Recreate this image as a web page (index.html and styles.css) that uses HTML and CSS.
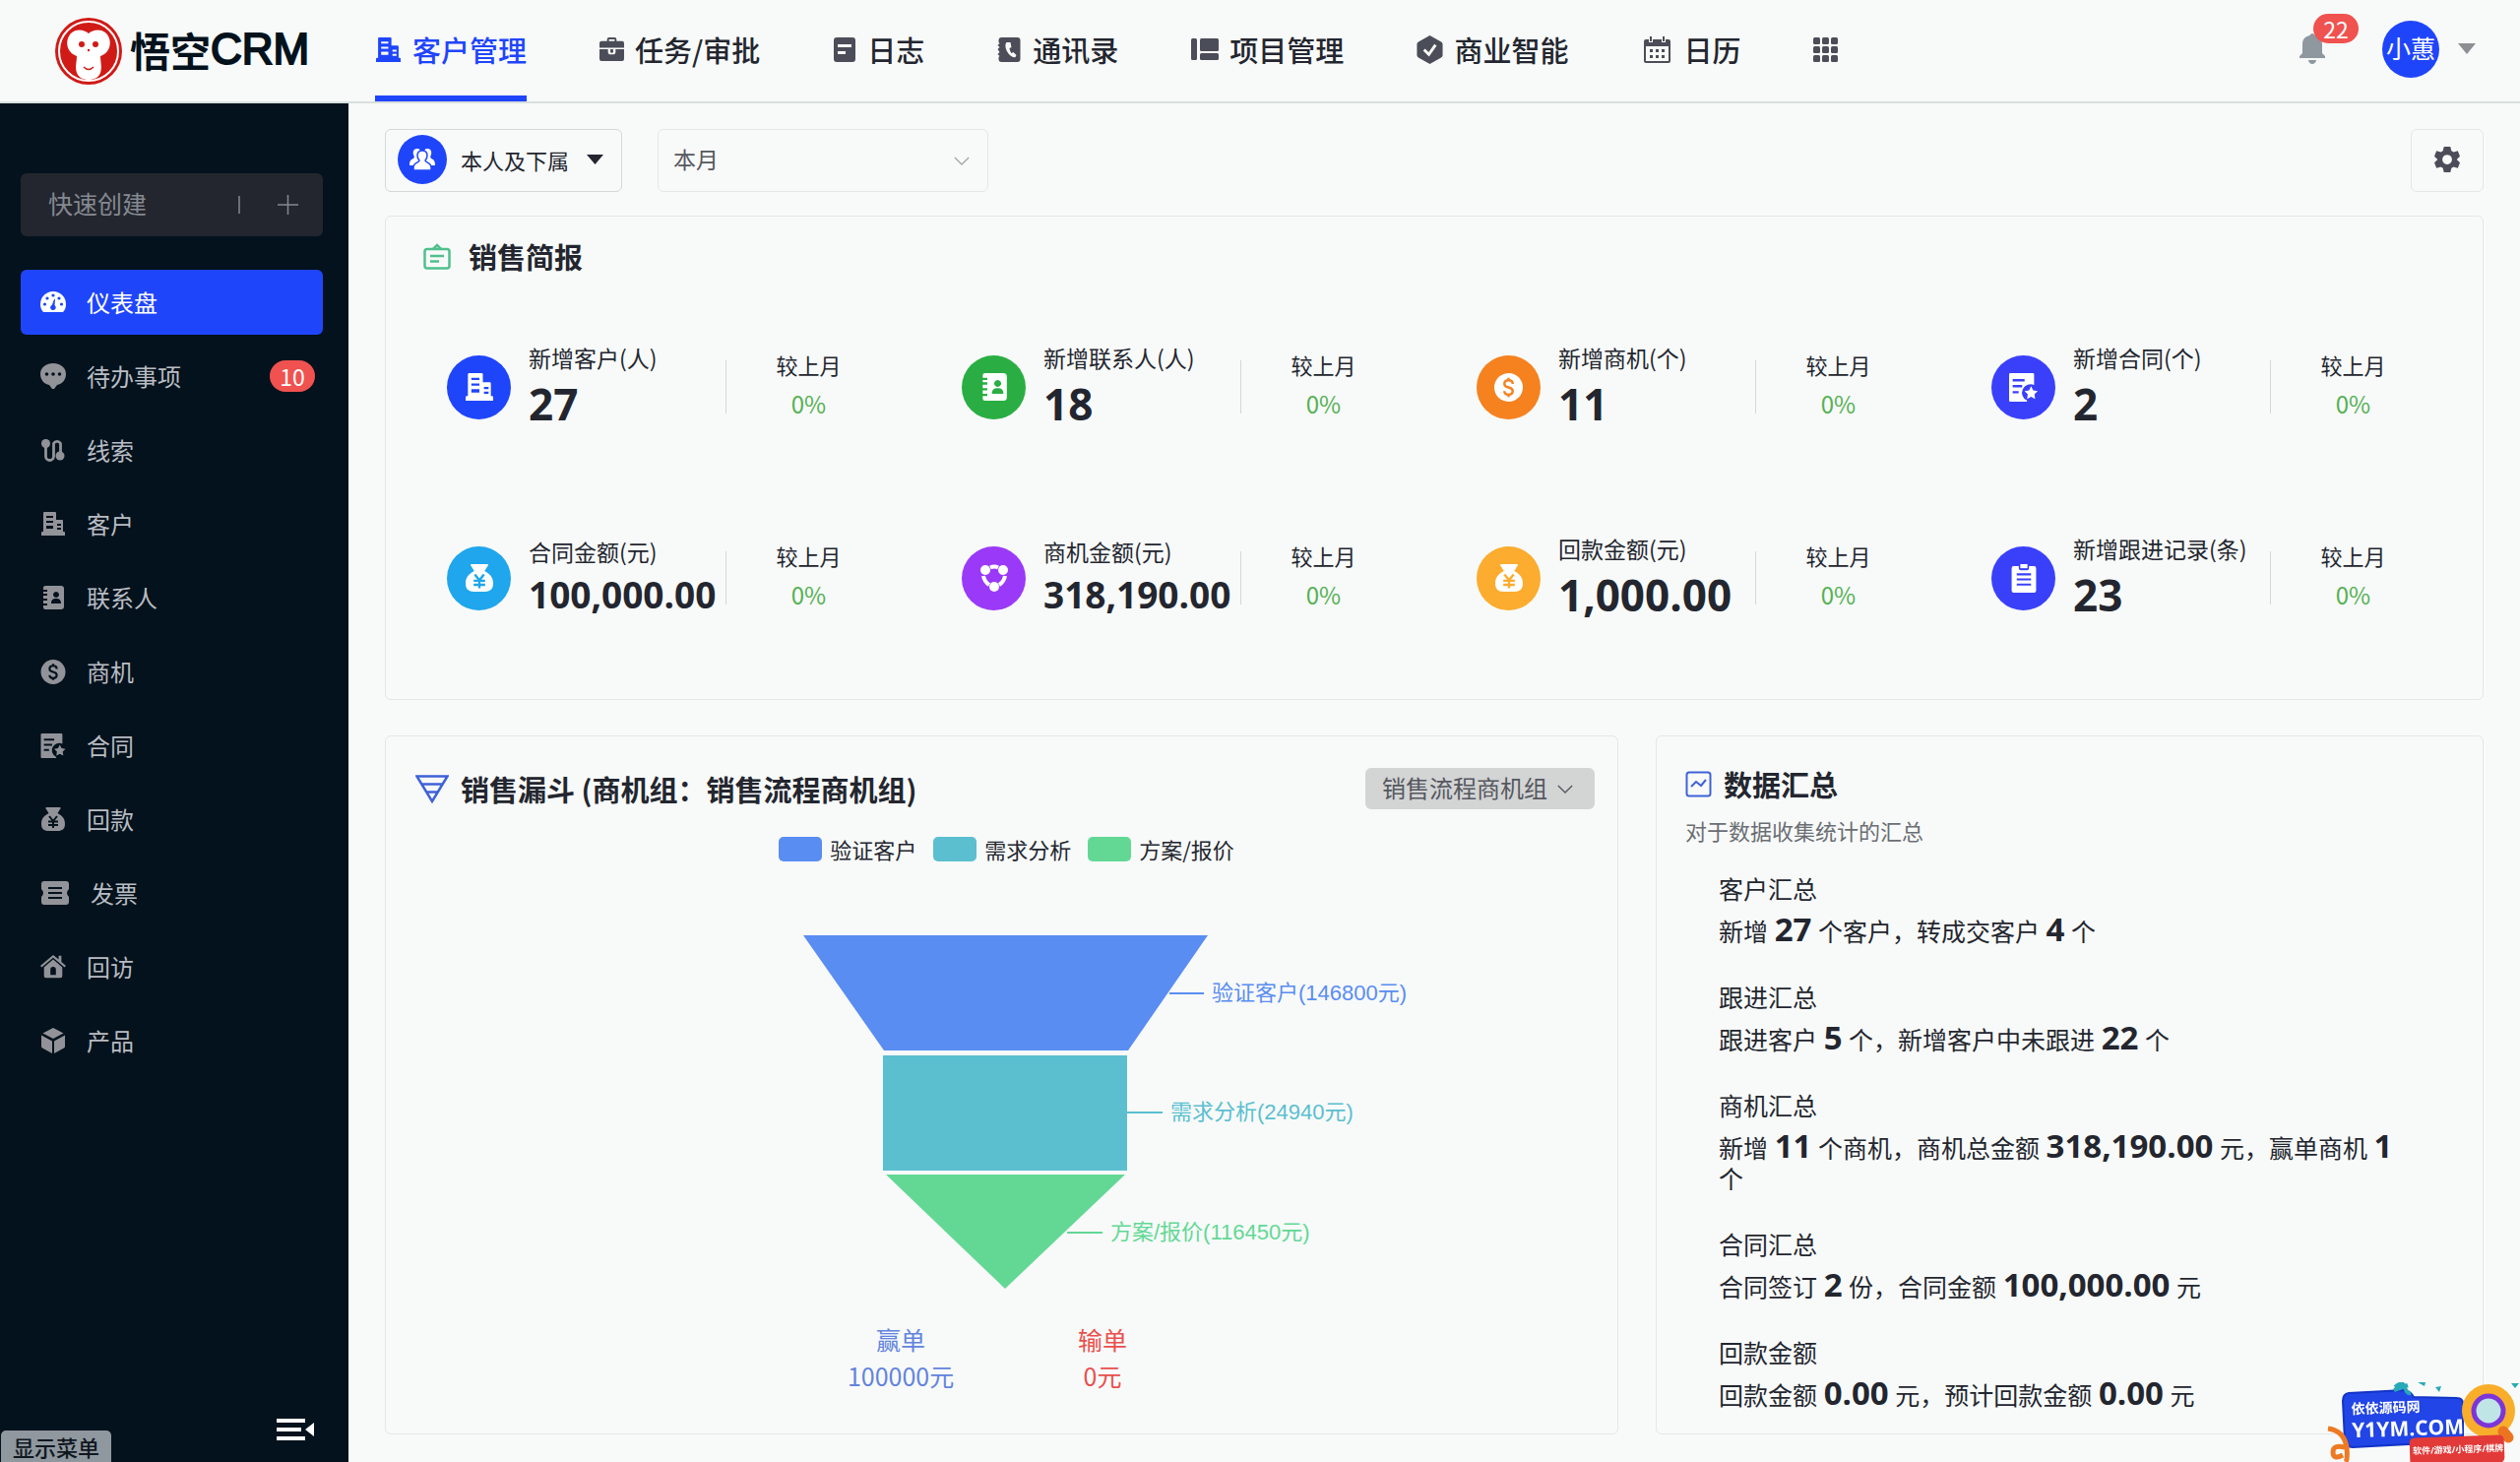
FILE: index.html
```html
<!DOCTYPE html>
<html lang="zh-CN">
<head>
<meta charset="utf-8">
<title>悟空CRM</title>
<meta name="viewport" content="width=device-width, initial-scale=1">
<link rel="stylesheet" href="styles.css">
</head>
<body>
<svg class="sprite" aria-hidden="true">
  <symbol id="i-building" viewBox="0 0 24 24"><path fill-rule="evenodd" d="M3 0h11a1 1 0 0 1 1 1v7h6a1 1 0 0 1 1 1v11h1a1 1 0 0 1 1 1v3H0v-3a1 1 0 0 1 1-1h1V1a1 1 0 0 1 1-1zM5 4v2h7V4zM5 9v2h7V9zM5 14v3h7v-3zM16 12v2h4v-2zM16 16v2h4v-2z"/></symbol>
  <symbol id="i-contact" viewBox="0 0 24 24"><path fill-rule="evenodd" d="M4 0h16a3 3 0 0 1 3 3v18a3 3 0 0 1-3 3H4a2 2 0 0 1-2-2v-2h4v-2H2v-3h4v-2H2v-3h4V8H2V6h4V4H2V2a2 2 0 0 1 2-2zM15 6a3 3 0 1 0 .01 0zM10 18h10c0-4-2-5-5-5s-5 1-5 5z"/></symbol>
  <symbol id="i-dollar" viewBox="0 0 24 24"><circle cx="12" cy="12" r="12"/><path class="cut" stroke-width="2" d="M15.500 9c0-2-1.500-3-3.500-3S8.500 7 8.500 9s1.500 2.500 3.500 3 3.500 1 3.500 3-1.500 3-3.500 3-3.500-1-3.500-3M12 4v2.500M12 17.500V20"/></symbol>
  <symbol id="i-contract" viewBox="0 0 24 24"><path fill-rule="evenodd" d="M1 0h19a1 1 0 0 1 1 1v9a7 7 0 0 0-6 13v1H1a1 1 0 0 1-1-1V1a1 1 0 0 1 1-1zM3 5v2h10V5zM3 10v2h8v-2zM3 15v2h5v-2z"/><path d="M18.500 11l1.700 3.500 3.800.600-2.700 2.700.600 3.900-3.400-1.900-3.400 1.900.600-3.900-2.700-2.700 3.800-.600z"/></symbol>
  <symbol id="i-bag" viewBox="0 0 24 24"><path d="M6 0h12a1 1 0 0 1 1 2l-2.500 4C22 9 24 12 24 17c0 5-3 7-7 7H7c-4 0-7-2-7-7 0-5 2-8 7.500-11L5 2a1 1 0 0 1 1-2z"/><path class="cut" stroke-width="2" d="M8 9l4 5 4-5M7 14.500h10M7 18h10M12 14v7"/></symbol>
  <symbol id="i-gauge" viewBox="0 0 26 22"><path d="M3 21C1 19 0 16 0 13a13 13 0 0 1 26 0c0 3-1 6-3 8z"/><g class="cutfill"><circle cx="4.500" cy="13" r="1.600"/><circle cx="7" cy="7" r="1.600"/><circle cx="13" cy="4" r="1.600"/><circle cx="19" cy="7" r="1.600"/><circle cx="21.500" cy="13" r="1.600"/><path d="M14 8l1 0-.500 6a2.800 2.800 0 1 1-2.600-.300z"/></g></symbol>
  <symbol id="i-chat" viewBox="0 0 26 26"><path d="M13 0c7 0 13 4 13 11 0 6-4 10-9 11l-3 4h-2l-3-4C4 21 0 17 0 11 0 4 6 0 13 0z"/><g class="cutfill"><circle cx="6.500" cy="11" r="1.800"/><circle cx="13" cy="11" r="1.800"/><circle cx="19.500" cy="11" r="1.800"/></g></symbol>
  <symbol id="i-route" viewBox="0 0 24 24"><circle cx="4.500" cy="5.500" r="4.500"/><circle cx="19" cy="18" r="4.500"/><path fill="none" stroke="currentColor" stroke-width="2.800" d="M4.500 6v12.500a4 4 0 0 0 8 0V5.500a4 4 0 0 1 7 0V16"/></symbol>
  <symbol id="i-ticket" viewBox="0 0 28 24"><path fill-rule="evenodd" d="M3 0h22a3 3 0 0 1 3 3v5q-4 4 0 8v5a3 3 0 0 1-3 3H3a3 3 0 0 1-3-3v-5q4-4 0-8V3a3 3 0 0 1 3-3zM7 6v2h14V6zM7 11v2h14v-2zM7 16v2h14v-2z"/></symbol>
  <symbol id="i-home" viewBox="0 0 28 26"><path d="M14 0l6 5V1h3v6.500l5 4.500-1.500 1.500L14 3 1.500 13.500 0 12z"/><path fill-rule="evenodd" d="M14 5l10 8.500V23a2 2 0 0 1-2 2H6a2 2 0 0 1-2-2v-9.500zM11 22h6v-6a3 3 0 0 0-6 0z"/></symbol>
  <symbol id="i-cube" viewBox="0 0 24 26"><path d="M12 0l10.500 5.500L12 11 1.500 5.500zM0 7.500l11 6V26L1 20.500a2 2 0 0 1-1-1.500zM24 7.500l-11 6V26l10-5.500a2 2 0 0 0 1-1.500z"/></symbol>
  <symbol id="i-clip" viewBox="0 0 24 28"><path fill-rule="evenodd" d="M2 2h5v2a2 2 0 0 0 2 2h6a2 2 0 0 0 2-2V2h5a2 2 0 0 1 2 2v22a2 2 0 0 1-2 2H2a2 2 0 0 1-2-2V4a2 2 0 0 1 2-2zM5 9v2h14V9zM5 14v2h14v-2zM5 19v2h14v-2z"/><path d="M8.500 0h7v4h-7z"/></symbol>
  <symbol id="i-chevron" viewBox="0 0 18 10"><path fill="none" stroke="currentColor" stroke-width="1.500" d="M1 1l8 8 8-8"/></symbol>
</svg>

<header class="topbar">
  <a class="brand" href="#" aria-label="悟空CRM">
    <svg class="brand-mark" viewBox="0 0 68 68" aria-hidden="true">
      <circle cx="34" cy="34" r="34" fill="#d01a16"/><circle cx="34" cy="34" r="30" fill="none" stroke="#fff" stroke-width="2"/>
      <path fill="#fff" d="M34 16c4-4 12-5 17-1 6 5 6 14 2 19-2 3-5 4-7 5 0 6 2 11 0 17-2 5-7 7-12 7s-10-2-12-7c-2-6 0-11 0-17-2-1-5-2-7-5-4-5-4-14 2-19 5-4 13-3 17 1z"/>
      <circle cx="27" cy="27" r="3" fill="#d01a16"/><circle cx="41" cy="27" r="3" fill="#d01a16"/><circle cx="34" cy="33" r="1.200" fill="#d01a16"/>
      <path fill="none" stroke="#d01a16" stroke-width="1.500" d="M29 50q5 5 10 0"/>
    </svg>
    <span class="brand-name">悟空<span class="brand-latin">CRM</span></span>
  </a>
  <nav class="modules" aria-label="模块">
    <a class="module is-active" href="#"><svg width="27" height="25"><use href="#i-building"/></svg>客户管理</a>
    <a class="module" href="#"><svg width="25" height="24" viewBox="0 0 26 25"><path fill-rule="evenodd" d="M8 4V2a2 2 0 0 1 2-2h6a2 2 0 0 1 2 2v2h6a2 2 0 0 1 2 2v5H0V6a2 2 0 0 1 2-2zM10 4h6V2h-6z"/><path d="M0 12.500h9V15a3 3 0 0 0 3 3h2a3 3 0 0 0 3-3v-2.500h9V23a2 2 0 0 1-2 2H2a2 2 0 0 1-2-2z"/><path d="M11.500 12.500h3V15a1.500 1.500 0 0 1-3 0z"/></svg>任务/审批</a>
    <a class="module" href="#"><svg width="24" height="25" viewBox="0 0 24 25"><path fill-rule="evenodd" d="M4 0h16a3 3 0 0 1 3 3v19a3 3 0 0 1-3 3H4a3 3 0 0 1-3-3V3a3 3 0 0 1 3-3zM5 7v3h14V7zM5 14v3h8v-3z"/></svg>日志</a>
    <a class="module" href="#"><svg width="25" height="25" viewBox="0 0 24 25"><path fill-rule="evenodd" d="M4 0h16a3 3 0 0 1 3 3v19a3 3 0 0 1-3 3H4a3 3 0 0 1-3-3v-2l1-1-2-2 2-2-2-3 2-2-2-2 2-2-1-1V3a3 3 0 0 1 3-3zM9 5c-2 2-1 7 1 10s5 6 8 5l1-2-3-3-2 1c-1-1-2-4-2-5l2-1-1-5z"/></svg>通讯录</a>
    <a class="module" href="#"><svg width="28" height="22" viewBox="0 0 28 22"><rect width="6" height="22" rx="1.500"/><rect x="9" width="19" height="13" rx="1.500"/><rect x="9" y="15" width="19" height="7" rx="1.500"/></svg>项目管理</a>
    <a class="module" href="#"><svg width="27" height="29" viewBox="0 0 27 30"><path d="M13.500 0l11.500 6.500a3 3 0 0 1 2 2.500v12a3 3 0 0 1-2 2.500L13.500 30 2 23.500A3 3 0 0 1 0 21V9a3 3 0 0 1 2-2.500z"/><path class="cut" stroke-width="3" d="M7.500 15l5 5 7-10"/></svg>商业智能</a>
    <a class="module" href="#"><svg width="32" height="27" viewBox="0 0 30 27"><path fill-rule="evenodd" d="M4 3h3v3h4V3h9v3h4V3h3a2 2 0 0 1 2 2v20a2 2 0 0 1-2 2H4a2 2 0 0 1-2-2V5a2 2 0 0 1 2-2zM4 10v15h23V10z"/><path d="M8 0h2v5H8zM21 0h2v5h-2zM8 13h3v3H8zM14 13h3v3h-3zM20 13h3v3h-3zM8 19h3v3H8zM14 19h3v3h-3zM20 19h3v3h-3z"/></svg>日历</a>
    <button class="module module-more" type="button" aria-label="更多"><svg width="25" height="25" viewBox="0 0 25 25"><g><rect width="7" height="7" rx="1.500"/><rect x="9" width="7" height="7" rx="1.500"/><rect x="18" width="7" height="7" rx="1.500"/><rect y="9" width="7" height="7" rx="1.500"/><rect x="9" y="9" width="7" height="7" rx="1.500"/><rect x="18" y="9" width="7" height="7" rx="1.500"/><rect y="18" width="7" height="7" rx="1.500"/><rect x="9" y="18" width="7" height="7" rx="1.500"/><rect x="18" y="18" width="7" height="7" rx="1.500"/></g></svg></button>
  </nav>
  <div class="account">
    <button class="bell" type="button" aria-label="通知"><svg width="26" height="31" viewBox="0 0 26 31"><path d="M13 0c1.500 0 2 1 2.500 2 5 1 7.500 4 7.500 9v9l3 3v2H0v-2l3-3v-9c0-5 2.500-8 7.500-9C11 1 11.500 0 13 0zM9 27h8c0 2-2 4-4 4s-4-2-4-4z"/></svg><span class="badge bell-badge">22</span></button>
    <button class="user" type="button"><span class="avatar">小蕙</span><svg width="18" height="11" viewBox="0 0 18 11"><path d="M0 0h18L9 11z"/></svg></button>
  </div>
</header>

<div class="shell">
  <aside class="sidebar">
    <button class="quick" type="button"><span>快速创建</span><svg width="61" height="22" viewBox="0 0 61 22" aria-hidden="true"><path fill="none" stroke="currentColor" stroke-width="1.500" d="M1 2v18M40 11h21M50.500 1v20"/></svg></button>
    <nav class="menu" aria-label="客户管理">
      <a class="menu-item is-active" href="#"><svg width="26" height="22"><use href="#i-gauge"/></svg>仪表盘</a>
      <a class="menu-item" href="#"><svg width="26" height="26"><use href="#i-chat"/></svg>待办事项<span class="badge">10</span></a>
      <a class="menu-item" href="#"><svg width="26" height="24"><use href="#i-route"/></svg>线索</a>
      <a class="menu-item" href="#"><svg width="26" height="24"><use href="#i-building"/></svg>客户</a>
      <a class="menu-item" href="#"><svg width="26" height="24"><use href="#i-contact"/></svg>联系人</a>
      <a class="menu-item" href="#"><svg width="26" height="25"><use href="#i-dollar"/></svg>商机</a>
      <a class="menu-item" href="#"><svg width="26" height="25"><use href="#i-contract"/></svg>合同</a>
      <a class="menu-item" href="#"><svg width="26" height="24"><use href="#i-bag"/></svg>回款</a>
      <a class="menu-item" href="#"><svg width="30" height="24"><use href="#i-ticket"/></svg>发票</a>
      <a class="menu-item" href="#"><svg width="26" height="26"><use href="#i-home"/></svg>回访</a>
      <a class="menu-item" href="#"><svg width="26" height="26"><use href="#i-cube"/></svg>产品</a>
    </nav>
    <button class="collapse" type="button" aria-label="收起菜单"><svg width="38" height="22" viewBox="0 0 38 22"><path d="M0 0h29v4H0zM0 9h25v4H0zM0 18h29v4H0zM29 11l9-7v14z"/></svg></button>
    <span class="menu-tip">显示菜单</span>
  </aside>

  <main class="content">
    <div class="toolbar">
      <button class="scope" type="button"><span class="scope-icon"><svg width="26" height="24" viewBox="0 0 26 24"><g fill="currentColor"><path d="M8 1c2 0 3 1 3 3-2 2-2 5 0 8-3 2-4 4-4 6H0c0-4 1-6 4-7 1-1 1-2 0-4-1-4 1-6 4-6zM18 1c-2 0-3 1-3 3 2 2 2 5 0 8 3 2 4 4 4 6h7c0-4-1-6-4-7-1-1-1-2 0-4 1-4-1-6-4-6z"/><path stroke="#1f45fb" stroke-width="1.500" d="M13 3c3 0 5 2 5 5 0 2-1 4-2 5 0 2 6 2 6 7v3H4v-3c0-5 6-5 6-7-1-1-2-3-2-5 0-3 2-5 5-5z"/></g></svg></span>本人及下属<svg class="caret" width="17" height="10" viewBox="0 0 17 10"><path d="M0 0h17L8.500 10z"/></svg></button>
      <label class="picker period"><select aria-label="时间"><option>本月</option></select><svg width="16" height="9"><use href="#i-chevron"/></svg></label>
      <button class="settings" type="button" aria-label="设置"><svg width="26" height="26" viewBox="0 0 24 24"><path fill-rule="evenodd" d="M9 0h6l1 4 2 1 4-1 2 5-3 3 3 3-2 5-4-1-2 1-1 4H9l-1-4-2-1-4 1-2-5 3-3-3-3 2-5 4 1 2-1zM12 7.500a4.500 4.500 0 1 0 .01 0z"/></svg></button>
    </div>

    <section class="card brief">
      <h2 class="card-title brief-title"><svg width="28" height="27" viewBox="0 0 28 27"><g fill="none" stroke="#4fc08d" stroke-width="2.500"><rect x="1.500" y="6" width="25" height="19.500" rx="2.500"/><path d="M10 6l4-4 4 4M7 13h14M7 18.500h9"/></g></svg>销售简报</h2>
      <div class="metrics">
        <article class="metric"><span class="disc disc-blue"><svg width="28" height="28"><use href="#i-building"/></svg></span><div class="figure"><h3>新增客户(人)</h3><strong>27</strong></div><div class="trend"><span>较上月</span><em>0%</em></div></article>
        <article class="metric"><span class="disc disc-green"><svg width="28" height="28"><use href="#i-contact"/></svg></span><div class="figure"><h3>新增联系人(人)</h3><strong>18</strong></div><div class="trend"><span>较上月</span><em>0%</em></div></article>
        <article class="metric"><span class="disc disc-orange"><svg width="29" height="29"><use href="#i-dollar"/></svg></span><div class="figure"><h3>新增商机(个)</h3><strong>11</strong></div><div class="trend"><span>较上月</span><em>0%</em></div></article>
        <article class="metric"><span class="disc disc-indigo"><svg width="29" height="29"><use href="#i-contract"/></svg></span><div class="figure"><h3>新增合同(个)</h3><strong>2</strong></div><div class="trend"><span>较上月</span><em>0%</em></div></article>
        <article class="metric"><span class="disc disc-sky"><svg width="28" height="28"><use href="#i-bag"/></svg></span><div class="figure"><h3>合同金额(元)</h3><strong class="long">100,000.00</strong></div><div class="trend"><span>较上月</span><em>0%</em></div></article>
        <article class="metric"><span class="disc disc-purple"><svg width="30" height="28" viewBox="0 0 30 28"><circle cx="6" cy="6" r="5"/><circle cx="24" cy="6" r="5"/><circle cx="15" cy="23" r="5"/><path fill="none" stroke="currentColor" stroke-width="4" d="M11 3.500q4-2 8 0M4 12q1 6 6 9M26 12q-1 6-6 9"/></svg></span><div class="figure"><h3>商机金额(元)</h3><strong class="long">318,190.00</strong></div><div class="trend"><span>较上月</span><em>0%</em></div></article>
        <article class="metric"><span class="disc disc-amber"><svg width="28" height="28"><use href="#i-bag"/></svg></span><div class="figure"><h3>回款金额(元)</h3><strong>1,000.00</strong></div><div class="trend"><span>较上月</span><em>0%</em></div></article>
        <article class="metric"><span class="disc disc-indigo"><svg width="28" height="29"><use href="#i-clip"/></svg></span><div class="figure"><h3>新增跟进记录(条)</h3><strong>23</strong></div><div class="trend"><span>较上月</span><em>0%</em></div></article>
      </div>
    </section>

    <div class="lower">
      <section class="card funnel">
        <header class="funnel-head">
          <h2 class="card-title"><svg width="34" height="29" viewBox="0 0 34 29"><path fill="none" stroke="#3f62d8" stroke-width="2.500" d="M1.500 1.500h31L17 27zM6 9.500h22M11 17.500h12"/></svg>销售漏斗 (商机组：销售流程商机组)</h2>
          <label class="picker group"><select aria-label="商机组"><option>销售流程商机组</option></select><svg width="16" height="9"><use href="#i-chevron"/></svg></label>
        </header>
        <ul class="legend"><li><i class="swatch swatch-blue"></i>验证客户</li><li><i class="swatch swatch-teal"></i>需求分析</li><li><i class="swatch swatch-green"></i>方案/报价</li></ul>
        <svg class="funnel-chart" width="1000" height="360" viewBox="0 0 1000 360" role="img" aria-label="销售漏斗">
          <g class="stage-blue"><path d="M298 0h411l-81 117H380z"/><path class="lead" d="M670 59h35"/><text x="713" y="66">验证客户(146800元)</text></g>
          <g class="stage-teal"><path d="M379 122h248v117H379z"/><path class="lead" d="M627 180h36"/><text x="671" y="187">需求分析(24940元)</text></g>
          <g class="stage-green"><path d="M382 243h243L503 359z"/><path class="lead" d="M566 302h36"/><text x="610" y="309">方案/报价(116450元)</text></g>
        </svg>
        <dl class="outcome"><div class="won"><dt>赢单</dt><dd>100000元</dd></div><div class="lost"><dt>输单</dt><dd>0元</dd></div></dl>
      </section>

      <section class="card summary">
        <h2 class="card-title"><svg width="27" height="27" viewBox="0 0 27 27"><g fill="none" stroke="#3f62d8" stroke-width="2"><rect x="1.500" y="1.500" width="24" height="24" rx="2.500"/><path d="M6 16l5-5 5 4 5-6"/></g></svg>数据汇总</h2>
        <p class="summary-note">对于数据收集统计的汇总</p>
        <div class="summary-list">
          <div class="entry"><h3>客户汇总</h3><p>新增 <b>27</b> 个客户，转成交客户 <b>4</b> 个</p></div>
          <div class="entry"><h3>跟进汇总</h3><p>跟进客户 <b>5</b> 个，新增客户中未跟进 <b>22</b> 个</p></div>
          <div class="entry"><h3>商机汇总</h3><p>新增 <b>11</b> 个商机，商机总金额 <b>318,190.00</b> 元，赢单商机 <b>1</b> 个</p></div>
          <div class="entry"><h3>合同汇总</h3><p>合同签订 <b>2</b> 份，合同金额 <b>100,000.00</b> 元</p></div>
          <div class="entry"><h3>回款金额</h3><p>回款金额 <b>0.00</b> 元，预计回款金额 <b>0.00</b> 元</p></div>
        </div>
      </section>
    </div>
  </main>
</div>

<a class="promo" href="#" aria-label="依依源码网"><svg width="196" height="81" viewBox="0 0 196 81">
  <path fill="#2145e6" stroke="#1234c8" stroke-width="2" d="M22 11l56-3q6 0 10 7l44 1q6 0 6 6v38l-112 6q-7 0-8-7l-2-40q0-7 6-8z"/>
  <path fill="none" stroke="#27a9b8" stroke-width="4" d="M69 5q8-7 10 0t6 6M68 8l14-5"/><path fill="#27a9b8" d="M92 0h8l-1 4zM110 5l6-1-2 6zM187 1l8 0-4 5z"/>
  <path fill="none" stroke="#ee7a24" stroke-width="5" d="M1 47q16 2 19 19 1 12-1 15M18 66q-12-3-12 5t10 3"/>
  <circle cx="164" cy="29" r="22" fill="#d4eef0" stroke="#f9ae2b" stroke-width="10"/><circle cx="164" cy="29" r="15" fill="#bfe5e6" stroke="#7d35d8" stroke-width="5"/>
  <path stroke="#ec7421" stroke-width="11" stroke-linecap="round" d="M179 50l5 6"/>
  <rect x="84" y="55" width="96" height="28" rx="5" fill="#e23a38" transform="rotate(-2 132 68)"/>
  <g fill="#fff" transform="rotate(-2 90 40)"><text class="promo-cn" x="25" y="30">依依源码网</text><text class="promo-en" x="25" y="54">Y1YM.COM</text><text class="promo-tag" x="86" y="73">软件/游戏/小程序/棋牌</text></g>
</svg></a>
</body>
</html>
```
FILE: styles.css
```css
:root {
  --page: #f8faf9;
  --line: #e2e7e8;
  --ink: #23262f;
  --blue: #1f45fb;
  --red: #f0524f;
  --night: #03121c;
}

* { box-sizing: border-box; }

body {
  margin: 0;
  min-height: 100vh;
  display: flex;
  flex-direction: column;
  background: var(--page);
  color: var(--ink);
  font: 24px/36px "Noto Sans CJK SC", "Noto Sans", sans-serif;
}

h2, h3, p, ul, dl, dd { margin: 0; padding: 0; font-weight: 400; }
a { color: inherit; text-decoration: none; }
button, select { font: inherit; color: inherit; border: 0; margin: 0; padding: 0; background: none; }
svg { display: block; flex: none; fill: currentColor; }
.sprite { position: absolute; width: 0; height: 0; }
.cut { fill: none; stroke: var(--hole, var(--page)); }
.cutfill { fill: var(--hole, var(--page)); }

.badge {
  min-width: 46px;
  height: 32px;
  padding: 0 10px;
  border-radius: 16px;
  background: var(--red);
  color: #fff;
  font-size: 23px;
  line-height: 32px;
  text-align: center;
}

/* Top bar */
.topbar {
  display: flex;
  align-items: stretch;
  height: 105px;
  padding: 0 45px 0 56px;
  border-bottom: 2px solid #d8dfdd;
}
.brand { display: flex; align-items: center; gap: 8px; width: 325px; }
.brand-mark { width: 68px; height: 68px; }
.brand-name { display: flex; align-items: center; padding-bottom: 3px; font-size: 41px; font-weight: 700; line-height: 64px; color: var(--night); }
.brand-latin { font: 44px/64px "Liberation Sans", Arial, sans-serif; -webkit-text-stroke: 2px currentColor; }
.modules { display: flex; gap: 74px; }
.module {
  display: flex;
  align-items: center;
  gap: 11px;
  padding-top: 3px;
  border-bottom: 6px solid transparent;
  font-size: 29px;
  font-weight: 500;
  white-space: nowrap;
}
.module svg { color: #4b4d58; }
.module.is-active { color: var(--blue); border-color: var(--blue); }
.module.is-active svg { color: inherit; }
.account { display: flex; align-items: center; gap: 58px; margin-left: auto; padding-bottom: 4px; }
.bell { position: relative; color: #8f979f; }
.bell-badge { position: absolute; left: 14px; top: -20px; height: 30px; line-height: 30px; }
.user { display: flex; align-items: center; gap: 19px; color: #8d8f92; }
.avatar { width: 58px; height: 58px; border-radius: 50%; background: var(--blue); color: #fff; font-size: 25px; line-height: 54px; text-align: center; }

.shell { flex: 1; display: flex; }

/* Sidebar */
.sidebar {
  position: relative;
  flex: none;
  display: flex;
  flex-direction: column;
  width: 354px;
  padding: 71px 26px 22px 21px;
  background: var(--night);
  color: #b9bcc3;
}
.quick {
  display: flex;
  align-items: center;
  justify-content: space-between;
  height: 64px;
  padding: 0 25px 0 28px;
  border-radius: 6px;
  background: #23262f;
  color: #85898f;
  font-size: 25px;
}
.quick span { padding-bottom: 4px; }
.menu { display: flex; flex-direction: column; gap: 9px; margin-top: 34px; }
.menu-item {
  --hole: var(--night);
  display: flex;
  align-items: center;
  gap: 21px;
  height: 66px;
  padding: 0 8px 0 20px;
  border-radius: 6px;
}
.menu-item svg { color: #929399; }
.menu-item .badge { margin-left: auto; }
.menu-item.is-active { --hole: var(--blue); background: var(--blue); color: #fff; }
.menu-item.is-active svg { color: #fff; }
.collapse { align-self: flex-end; margin: auto 9px 0 0; color: #fff; }
.menu-tip {
  position: absolute;
  left: 1px;
  bottom: 0;
  padding: 0 12px;
  border-radius: 5px 5px 0 0;
  background: #8f979f;
  color: #101820;
  font-size: 22px;
  font-weight: 500;
  line-height: 32px;
}

/* Content */
.content { flex: 1; min-width: 0; display: flex; flex-direction: column; padding: 26px 37px 28px; }
.toolbar { display: flex; gap: 36px; margin-bottom: 24px; }
.scope {
  display: flex;
  align-items: center;
  height: 64px;
  padding: 0 18px 2px 12px;
  border: 1px solid #d4d8d9;
  border-radius: 6px;
  font-size: 22px;
}
.scope-icon { display: grid; place-items: center; width: 50px; height: 50px; margin-right: 14px; border-radius: 50%; background: var(--blue); color: #fff; }
.caret { margin-left: 18px; }
.picker { position: relative; display: flex; align-items: center; color: #55585f; }
.picker select { width: 100%; height: 100%; appearance: none; }
.picker svg { position: absolute; pointer-events: none; }
.period { width: 336px; border: 1px solid var(--line); border-radius: 6px; font-size: 23px; }
.period select { padding: 0 0 4px 15px; }
.period svg { right: 18px; color: #a3a7aa; }
.settings { display: grid; place-items: center; width: 74px; height: 64px; margin-left: auto; padding-bottom: 2px; border: 1px solid var(--line); border-radius: 6px; color: #4b4d58; }

.card { border: 1px solid var(--line); border-radius: 6px; }
.card-title { display: flex; align-items: center; gap: 12px; font-size: 29px; font-weight: 700; line-height: 40px; }

.brief { padding: 20px 0 26px 38px; }
.brief-title { gap: 18px; }
.metrics { display: grid; grid-template-columns: repeat(4, 1fr); grid-auto-rows: 194px; margin-top: 16px; }
.metric { display: flex; align-items: center; padding: 0 48px 0 24px; }
.disc { display: grid; place-items: center; width: 65px; height: 65px; margin-right: 18px; border-radius: 50%; background: var(--hole); color: #fff; }
.disc-blue { --hole: #1f45fb; }
.disc-green { --hole: #2aae43; }
.disc-orange { --hole: #f5821f; }
.disc-indigo { --hole: #3a40fa; }
.disc-sky { --hole: #1fa6ec; }
.disc-purple { --hole: #9a3af8; }
.disc-amber { --hole: #fcac2f; }
.figure { flex: 1; min-width: 0; white-space: nowrap; }
.figure h3 { margin-bottom: 4px; font-size: 23px; line-height: 30px; }
.figure strong { display: block; font: 700 44px/56px "Open Sans", "Noto Sans", sans-serif; }
.figure .long { font-size: 37px; line-height: 50px; }
.trend { display: flex; flex-direction: column; justify-content: center; width: 168px; height: 54px; padding-bottom: 6px; border-left: 1px solid #d3d7d8; text-align: center; font-size: 22px; line-height: 40px; }
.trend em { font-size: 24px; font-style: normal; color: #55b154; }

.lower { flex: 1; display: grid; grid-template-columns: 149fr 100fr; gap: 38px; margin-top: 36px; }

/* Funnel */
.funnel { padding: 32px 0 38px; }
.funnel-head { display: flex; align-items: center; justify-content: space-between; padding: 0 23px 0 30px; }
.group { height: 42px; border-radius: 6px; background: #d3d4d4; }
.group select { padding: 0 48px 2px 17px; }
.group svg { right: 22px; }
.legend { display: flex; justify-content: center; gap: 17px; margin-top: 27px; padding-left: 10px; list-style: none; font-size: 22px; line-height: 26px; }
.legend li { display: flex; align-items: center; gap: 8px; }
.swatch { width: 44px; height: 25px; border-radius: 5px; }
.swatch-blue { background: #5a8df2; }
.swatch-teal { background: #5bbfd0; }
.swatch-green { background: #63d895; }
.funnel-chart { max-width: 100%; margin: 75px auto 0; font: 22px "Liberation Sans", "Noto Sans CJK SC", sans-serif; }
.lead { stroke: currentColor; stroke-width: 2; }
.stage-blue { color: #5a8df2; fill: #5a8df2; }
.stage-teal { color: #5bbfd0; fill: #5bbfd0; }
.stage-green { color: #63d895; fill: #63d895; }
.outcome { display: flex; justify-content: center; margin-top: 32px; font-size: 25px; line-height: 37px; text-align: center; }
.outcome div { width: 205px; }
.won { color: #6384dd; }
.lost { color: #e9504d; }

/* Summary */
.summary { padding: 28px 77px 0 29px; }
.summary-note { margin-top: 9px; color: #6b6e74; font-size: 22px; }
.summary-list { display: flex; flex-direction: column; gap: 33px; margin: 23px 0 0 34px; font-size: 25px; }
.entry h3 { font-size: 25px; }
.entry p { margin-top: 8px; line-height: 31px; }
.entry b { margin: 0 1px; font: 700 33px/31px "Open Sans", "Noto Sans", sans-serif; }

/* Promo sticker */
.promo { position: fixed; right: 0; bottom: 0; }
.promo text { font-family: "Open Sans", "Noto Sans CJK SC", sans-serif; font-weight: 700; }
.promo-cn { font-size: 14px; }
.promo-en { font-size: 21px; }
.promo-tag { font-size: 9px; }
```
